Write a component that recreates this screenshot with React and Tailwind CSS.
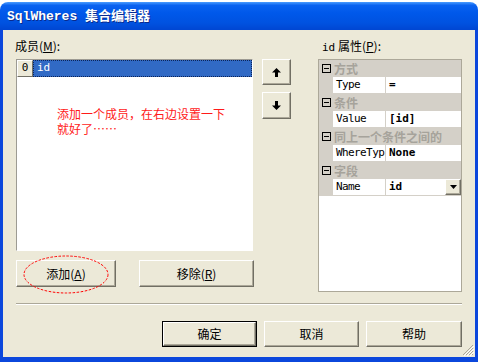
const Btn = ({ children, className = "", isDefault = false }) => {
  const inner = (
    <div className="flex h-full w-full items-center justify-center border border-t-white border-l-white border-b-[#716f64] border-r-[#716f64] bg-[#ece9d8] shadow-[inset_-1px_-1px_0_#aca899] text-[12px] text-black">
      {children}
    </div>
  );
  if (isDefault) {
    return <div className={`border border-black ${className}`}>{inner}</div>;
  }
  return <div className={className}>{inner}</div>;
};

const Arrow = ({ down }) => (
  <svg width="9" height="9" viewBox="0 0 9 9" className={down ? "rotate-180" : ""}>
    <path d="M4.5 0 L9 4.5 L6 4.5 L6 9 L3 9 L3 4.5 L0 4.5 Z" fill="#000" />
  </svg>
);

const Category = ({ label }) => (
  <div className="flex h-[17px] items-center bg-[#d4d0c8]">
    <div className="flex w-[15px] shrink-0 justify-center">
      <div className="flex h-[9px] w-[9px] items-center justify-center border border-black">
        <div className="h-px w-[5px] bg-black" />
      </div>
    </div>
    <span className="text-[12px] font-bold leading-[17px] text-[#a6a39b] whitespace-nowrap">{label}</span>
  </div>
);

const Item = ({ name, value, dropdown }) => (
  <div className="flex h-[17px]">
    <div className="w-[14px] bg-[#d4d0c8]" />
    <div className="flex w-[52px] items-center whitespace-nowrap border-b border-[#d4d0c8] bg-white pl-[3px] font-['DejaVu_Sans_Mono',monospace] text-[11px] tracking-[-0.6px]">
      {name}
    </div>
    <div className="flex flex-1 items-center border-b border-l border-[#d4d0c8] bg-white pl-[3px] font-['DejaVu_Sans_Mono',monospace] text-[11px] font-bold">
      <span className="flex-1">{value}</span>
      {dropdown && (
        <div className="flex h-[16px] w-[16px] items-center justify-center border border-t-white border-l-white border-b-[#716f64] border-r-[#716f64] bg-[#ece9d8] shadow-[inset_-1px_-1px_0_#aca899]">
          <svg width="7" height="4" viewBox="0 0 7 4">
            <path d="M0 0 L7 0 L3.5 4 Z" fill="#000" />
          </svg>
        </div>
      )}
    </div>
  </div>
);

export default function App() {
  return (
    <div className="h-[362px] w-[480px] bg-white pt-[2px] font-['Noto_Sans_CJK_SC',sans-serif] text-black">
      <div className="flex h-[360px] w-[478px] flex-col overflow-hidden rounded-t-[8px]">
        {/* title bar */}
        <div className="flex h-[28px] items-center bg-[linear-gradient(180deg,#4a9cff_0%,#0a62f0_12%,#0058ea_40%,#0052e0_75%,#0046d2_100%)] pl-[7px] pt-[2px]">
          <span className="font-['Liberation_Mono','Noto_Sans_CJK_SC',monospace] text-[13px] font-bold text-white [text-shadow:1px_1px_0_#0a2a8c]">
            SqlWheres 集合编辑器
          </span>
        </div>

        <div className="flex-1 bg-[#0b47dc] px-[3px] pb-[5px]">
          <div className="relative flex h-full flex-col bg-[#ece9d8] px-[13px] pt-[9px]">
            <div className="flex h-[253px]">
              {/* left column */}
              <div className="flex w-[238px] flex-col">
                <div className="-ml-px h-[20px] text-[12px] leading-[14px]">
                  成员(<span className="underline">M</span>):
                </div>
                <div className="relative h-[192px] w-[237px] border border-t-[#9d9b93] border-l-[#9d9b93] border-b-white border-r-white bg-white">
                  <div className="flex h-[17px]">
                    <div className="flex w-[16px] items-center justify-center border border-t-white border-l-white border-b-[#716f64] border-r-[#716f64] bg-[#ece9d8] font-['DejaVu_Sans_Mono',monospace] text-[11px]">
                      0
                    </div>
                    <div className="flex flex-1 items-center border border-dotted border-[#0c2458] bg-[#316ac5] pl-[3px] font-['DejaVu_Sans_Mono',monospace] text-[11px] text-white">
                      id
                    </div>
                  </div>
                  <div className="absolute left-[40px] top-[46px] text-[12px] leading-[15px] text-[#ff1a1a]">
                    <div>添加一个成员，在右边设置一下</div>
                    <div>就好了……</div>
                  </div>
                </div>
                <div className="mt-[9px] flex h-[27px] justify-between">
                  <div className="relative w-[100px]">
                    <Btn className="h-full w-full">
                      添加(<span className="underline">A</span>)
                    </Btn>
                    <svg className="absolute left-[7px] top-[-5px]" width="86" height="39" viewBox="0 0 86 39">
                      <ellipse cx="43" cy="19.5" rx="42" ry="18.5" fill="none" stroke="#ff0000" strokeWidth="1" strokeDasharray="2.5 1.5" />
                    </svg>
                  </div>
                  <Btn className="h-full w-[115px]">
                    移除(<span className="underline">R</span>)
                  </Btn>
                </div>
              </div>

              {/* up / down */}
              <div className="ml-[8px] flex w-[29px] flex-col gap-[7px] pt-[20px]">
                <Btn className="h-[26px] w-[29px]">
                  <Arrow />
                </Btn>
                <Btn className="h-[27px] w-[29px]">
                  <Arrow down />
                </Btn>
              </div>

              {/* property grid */}
              <div className="ml-[27px] flex w-[144px] flex-col">
                <div className="h-[20px] pl-[4px] text-[12px] leading-[14px]">
                  <span className="font-['DejaVu_Sans_Mono',monospace] text-[11px]">id</span> 属性(<span className="underline">P</span>):
                </div>
                <div className="flex h-[233px] flex-col overflow-hidden border border-[#aca899] bg-white">
                  <Category label="方式" />
                  <Item name="Type" value="=" />
                  <Category label="条件" />
                  <Item name="Value" value="[id]" />
                  <Category label="同上一个条件之间的" />
                  <Item name="WhereTyp" value="None" />
                  <Category label="字段" />
                  <Item name="Name" value="id" dropdown />
                </div>
              </div>
            </div>

            {/* separator */}
            <div className="mt-[11px] h-[2px] border-t border-b border-t-[#aca899] border-b-white" />

            {/* bottom buttons */}
            <div className="mt-[16px] flex h-[26px] justify-end gap-[7px]">
              <Btn isDefault className="h-full w-[95px]">确定</Btn>
              <Btn className="h-full w-[95px]">取消</Btn>
              <Btn className="h-full w-[96px]">帮助</Btn>
            </div>

            {/* size grip */}
            <svg className="absolute bottom-[1px] right-[1px]" width="12" height="12" viewBox="0 0 12 12">
              <path d="M11 1 L1 11 M11 4 L4 11 M11 7 L7 11 M11 10 L10 11" stroke="#aca899" strokeWidth="1" />
              <path d="M12 2 L2 12 M12 5 L5 12 M12 8 L8 12" stroke="#ffffff" strokeWidth="1" />
            </svg>
          </div>
        </div>
      </div>
    </div>
  );
}
